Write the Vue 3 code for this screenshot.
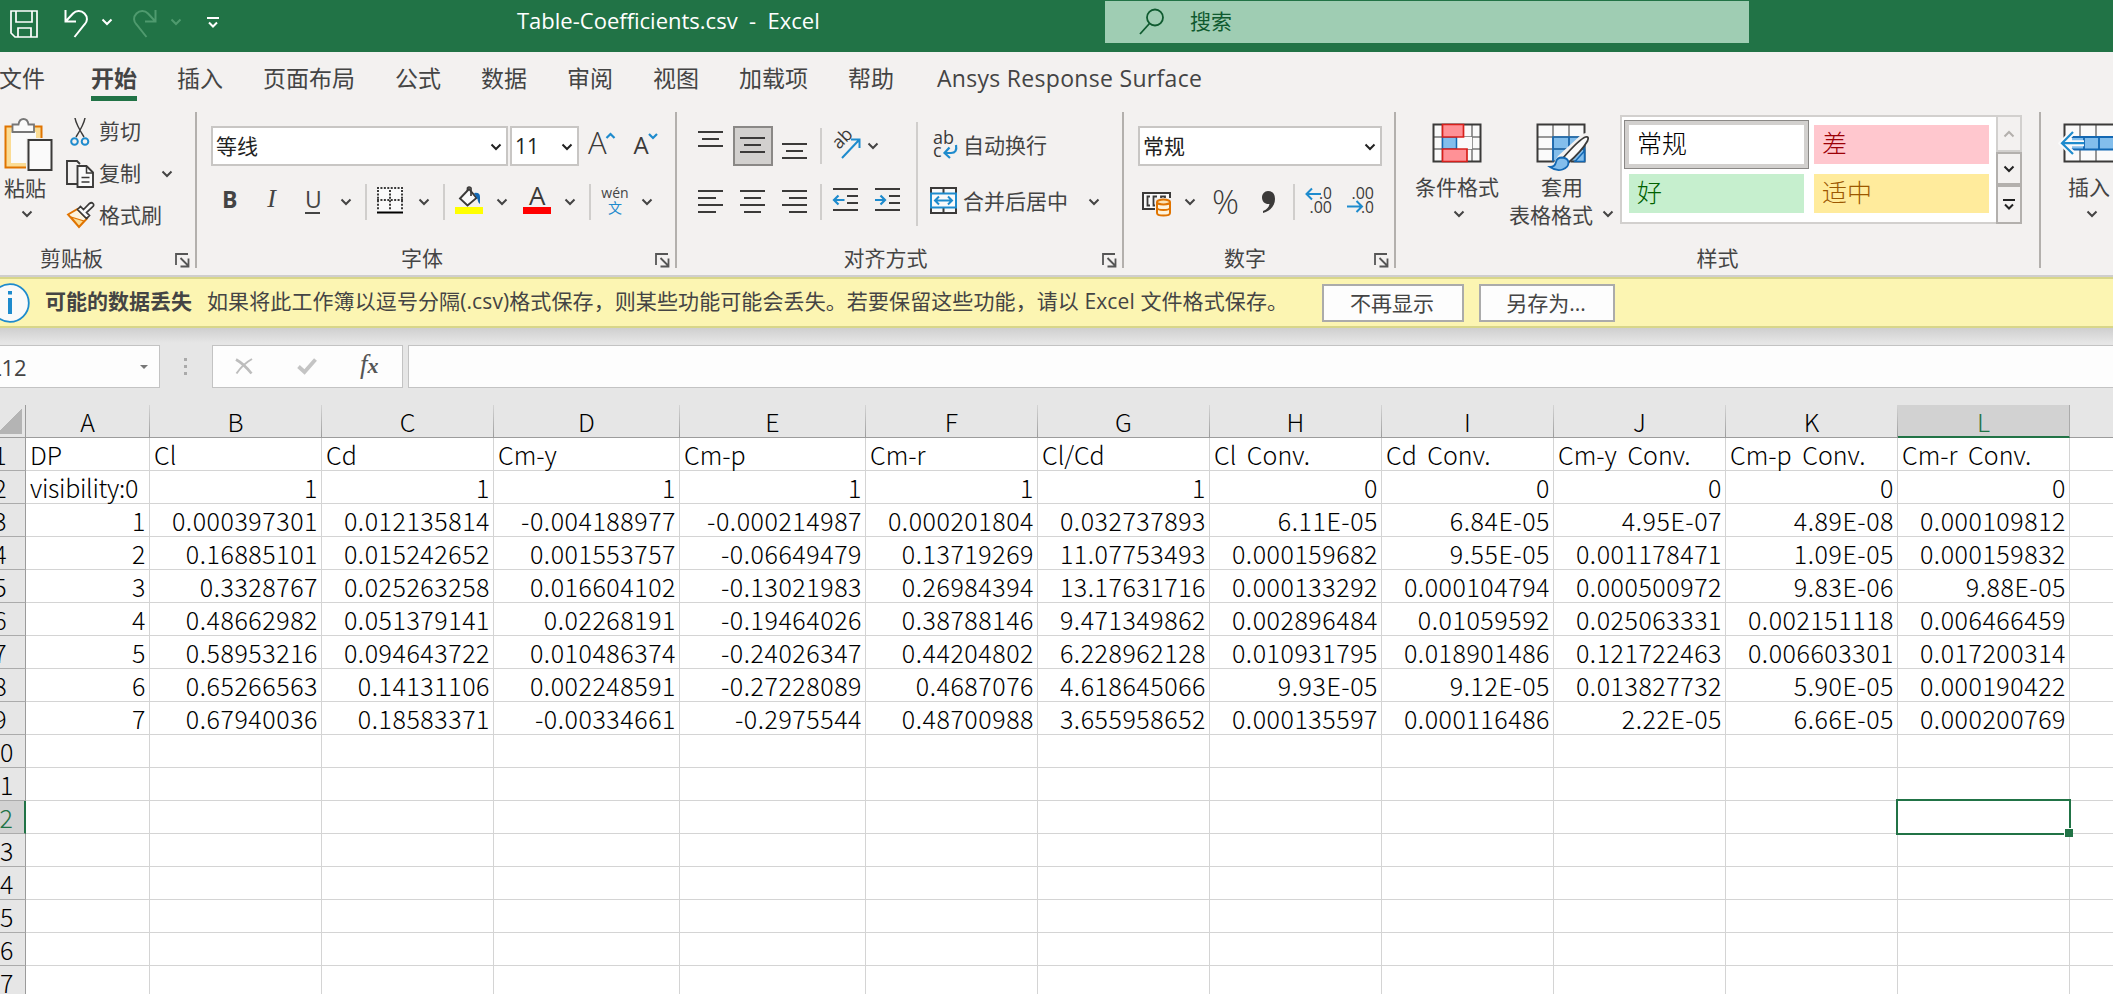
<template>
    <div class="excel">
        <div class="titlebar">
            <svg class="qa-save" width="28" height="28" viewBox="0 0 28 28" fill="none" stroke="#fff" stroke-width="1.7">
                <path d="M1 1h26v26H5l-4-4z"/>
                <path d="M6 1v11h16V1M8 27v-9h13v9"/>
            </svg>
            <svg class="qa-undo" width="25" height="28" viewBox="0 0 25 28" fill="none" stroke="#fff" stroke-width="2">
                <path d="M1.5 0v11.5H12M2 11l7-7.5C12 .5 17 0 20.500 3.500c3.500 3.500 3 8 0 11L10.500 27"/>
            </svg>
            <Chevron class="qa-chev"/>
            <svg class="qa-redo" width="25" height="28" viewBox="0 0 25 28" fill="none" stroke="#4f9a6e" stroke-width="2">
                <path d="M23.500 0v11.500H13M23 11l-7-7.500C13 .5 8 0 4.500 3.500c-3.500 3.500-3 8 0 11L14.500 27"/>
            </svg>
            <Chevron class="qa-chev qa-chev-off"/>
            <svg class="qa-custom" width="12" height="12" viewBox="0 0 12 12" fill="none" stroke="#fff" stroke-width="2">
                <path d="M0 1h12M2 5.500l4 4 4-4"/>
            </svg>
            <div class="doc-name">Table-Coefficients.csv&nbsp; -&nbsp; Excel</div>
            <div class="search">
                <svg width="26" height="28" viewBox="0 0 26 28" fill="none" stroke="#0f5a2f" stroke-width="1.8">
                    <circle cx="16" cy="9.500" r="8"/>
                    <path d="M10.500 15.500L1 26"/>
                </svg>
                <span>搜索</span>
            </div>
        </div>

        <div class="tabs">
            <div v-for="tab in tabs" :key="tab" class="tab" :class="{ active: tab === '开始', addin: tab.startsWith('Ansys') }">{{ tab }}</div>
        </div>

        <div class="ribbon">
            <!-- clipboard -->
            <div class="group g-clip">
                <div class="group-body">
                    <div class="paste">
                        <svg width="50" height="54" viewBox="0 0 50 54">
                            <path d="M1.500 8.500h36v41h-36z" fill="#fbdc94" stroke="#e07400" stroke-width="2"/>
                            <path d="M7 14h25v31H7z" fill="#fafafa"/>
                            <path d="M22 20h28v34H22z" fill="#f3f1f0"/>
                            <path d="M8.500 14V6.500h6C15 3 17 1 19.500 1s4.500 2 5 5.500h5.500V14z" fill="#fafafa" stroke="#777" stroke-width="1.800"/>
                            <path d="M24.500 22h23v30h-23z" fill="#fafafa" stroke="#3b3a39" stroke-width="2"/>
                        </svg>
                        <span>粘贴</span>
                        <Chevron/>
                    </div>
                    <div class="clip-list">
                        <div class="clip-item">
                            <svg width="28" height="30" viewBox="0 0 28 30" fill="none">
                                <path d="M9 1c1 6 4 11 9 19M19 1c-1 6-4 11-9 19" stroke="#3b3a39" stroke-width="1.500"/>
                                <circle cx="8.500" cy="24.500" r="3.300" stroke="#1e8bcd" stroke-width="2"/>
                                <circle cx="19" cy="24.500" r="3.300" stroke="#1e8bcd" stroke-width="2"/>
                            </svg>
                            <span>剪切</span>
                        </div>
                        <div class="clip-item">
                            <svg width="28" height="30" viewBox="0 0 28 30" fill="none" stroke="#3b3a39" stroke-width="1.900">
                                <path d="M11 25H1V2h10l3 3" fill="none"/>
                                <path d="M11.500 7h9l6.500 6.500V28H11.500z" fill="#fafafa"/>
                                <path d="M20.500 7v7H27M15.500 18.500h8M15.500 23h8" stroke-width="1.500"/>
                            </svg>
                            <span>复制</span>
                            <Chevron class="copy-chev"/>
                        </div>
                        <div class="clip-item">
                            <svg width="28" height="30" viewBox="0 0 28 30" fill="none">
                                <path d="M2 13.500L11.500 8l9.500 9.500L13 26z" fill="#fdf3dd" stroke="#e07400" stroke-width="1.900"/>
                                <path d="M5 16l13 4-5 5.500z" fill="#fbdc94" stroke="#e07400" stroke-width="1.300"/>
                                <path d="M11.500 8.500L14.500 5.500 17.500 8.500 23.500 2.500Q25.500 1 27 2.500T26.500 6L20.500 11.500 23.500 14.500 20.500 17.500z" fill="#fafafa" stroke="#3b3a39" stroke-width="1.700"/>
                            </svg>
                            <span>格式刷</span>
                        </div>
                    </div>
                </div>
                <div class="group-foot"><span>剪贴板</span><Launcher/></div>
            </div>

            <!-- font -->
            <div class="group g-font">
                <div class="group-body stack">
                    <div class="row row1">
                        <div class="combo combo-font"><span>等线</span><Chevron/></div>
                        <div class="combo combo-size"><span>11</span><Chevron/></div>
                        <svg class="ic-grow" width="28" height="30" viewBox="0 0 28 30" fill="none">
                            <text x="0" y="27" font-size="31" font-weight="300" fill="#3b3a39">A</text>
                            <path d="M18.500 11l4-4 4 4" stroke="#1e8bcd" stroke-width="2.200"/>
                        </svg>
                        <svg class="ic-shrink" width="26" height="30" viewBox="0 0 26 30" fill="none">
                            <text x="0.500" y="27" font-size="24" fill="#3b3a39">A</text>
                            <path d="M16 7l4 4 4-4" stroke="#1e8bcd" stroke-width="2.200"/>
                        </svg>
                    </div>
                    <div class="row row2">
                        <div class="letter bold">B</div>
                        <div class="letter italic">I</div>
                        <div class="letter under">U</div>
                        <Chevron/>
                        <div class="sep s1"></div>
                        <svg class="ic-border" width="26" height="27" viewBox="0 0 26 27" fill="none">
                            <path d="M0 0h26v25H0z" fill="#fafafa"/>
                            <path d="M0 1h26M0 13h26M1 3v20M13 3v20M25 3v20" stroke="#3b3a39" stroke-width="2" stroke-dasharray="2 1.430"/>
                            <path d="M0 25.500h26" stroke="#000" stroke-width="2"/>
                        </svg>
                        <Chevron class="c2"/>
                        <div class="sep s2"></div>
                        <svg class="ic-fill" width="28" height="28" viewBox="0 0 28 28" fill="none">
                            <path d="M5 12.500L14 3l7.500 9L12.500 19.500z" fill="#fafafa" stroke="#3b3a39" stroke-width="1.900"/>
                            <path d="M12.500 5V2q1.500-2 3.500 0v8" stroke="#3b3a39" stroke-width="1.700"/>
                            <path d="M19 7q6-1 6 4v7q-2-1-2.500-5z" fill="#1368b3"/>
                            <path d="M0 21h28v7H0z" fill="#ff0"/>
                        </svg>
                        <Chevron class="c2"/>
                        <svg class="ic-color" width="28" height="28" viewBox="0 0 28 28" fill="none">
                            <text x="6" y="19" font-size="26" fill="#3b3a39">A</text>
                            <path d="M0 21h28v7H0z" fill="#f00"/>
                        </svg>
                        <Chevron class="c2"/>
                        <div class="sep s3"></div>
                        <div class="phonetic"><span>wén</span><b>文</b></div>
                        <Chevron class="c4"/>
                    </div>
                </div>
                <div class="group-foot"><span>字体</span><Launcher/></div>
            </div>

            <!-- alignment -->
            <div class="group g-align">
                <div class="group-body">
                    <div class="align-left">
                        <div class="row row1">
                            <div class="tool"><Lines :rows="[[0, 25], [4, 21], [0, 25]]" :top="-7"/></div>
                            <div class="tool pressed"><Lines :rows="[[0, 25], [4, 21], [0, 25]]" :top="-1"/></div>
                            <div class="tool"><Lines :rows="[[0, 25], [4, 21], [0, 25]]" :top="5"/></div>
                            <div class="sep"></div>
                            <svg class="ic-orient" width="30" height="30" viewBox="0 0 30 30" fill="none">
                                <text x="0" y="0" transform="translate(8 20) rotate(-45)" font-size="18" fill="#3b3a39">ab</text>
                                <path d="M11 28L28 10M20 9.500h8.500V18" stroke="#1e8bcd" stroke-width="2"/>
                            </svg>
                            <Chevron/>
                        </div>
                        <div class="row row2">
                            <div class="tool"><Lines :rows="[[0, 25], [0, 18], [0, 25], [0, 18]]" :top="-1"/></div>
                            <div class="tool"><Lines :rows="[[0, 25], [4, 21], [0, 25], [4, 21]]" :top="-1"/></div>
                            <div class="tool"><Lines :rows="[[0, 25], [7, 25], [0, 25], [7, 25]]" :top="-1"/></div>
                            <div class="sep"></div>
                            <svg class="ic-indent" width="26" height="24" viewBox="0 0 26 24" fill="none" stroke-width="1.900">
                                <path d="M0 1h25M14 8h11M14 15h11M0 22h25" stroke="#3b3a39"/>
                                <path d="M1 12h10.500M5.500 7.500L1 12l4.500 4.500" stroke="#1e8bcd" stroke-width="2.200"/>
                            </svg>
                            <svg class="ic-indent" width="26" height="24" viewBox="0 0 26 24" fill="none" stroke-width="1.900">
                                <path d="M0 1h25M14 8h11M14 15h11M0 22h25" stroke="#3b3a39"/>
                                <path d="M0 12h10M5.500 7.500L10 12l-4.500 4.500" stroke="#1e8bcd" stroke-width="2.200"/>
                            </svg>
                        </div>
                    </div>
                    <div class="tall-sep"></div>
                    <div class="align-right">
                        <div class="row row1">
                            <svg class="ic-wrap" width="28" height="30" viewBox="0 0 28 30" fill="none">
                                <text x="3" y="14" font-size="18" fill="#3b3a39">ab</text>
                                <text x="3" y="27" font-size="18" fill="#3b3a39">c</text>
                                <path d="M26 15q1.500 8-5 8H15M19.500 17.500L14.500 23l5.500 5" stroke="#1e8bcd" stroke-width="2.200"/>
                            </svg>
                            <span>自动换行</span>
                        </div>
                        <div class="row row2">
                            <svg class="ic-merge" width="27" height="27" viewBox="0 0 27 27" fill="none">
                                <path d="M1 1h25v25H1zM13.500 1v5M13.500 21v5" fill="#fafafa" stroke="#3b3a39" stroke-width="2"/>
                                <path d="M1 6.500h25v14H1z" fill="#fafafa" stroke="#1e8bcd" stroke-width="2"/>
                                <path d="M5 13.500h17M9 9.500l-4 4 4 4M18 9.500l4 4-4 4" stroke="#1e8bcd" stroke-width="2"/>
                            </svg>
                            <span>合并后居中</span>
                            <Chevron class="merge-chev"/>
                        </div>
                    </div>
                </div>
                <div class="group-foot"><span>对齐方式</span><Launcher/></div>
            </div>

            <!-- number -->
            <div class="group g-num">
                <div class="group-body stack">
                    <div class="row row1">
                        <div class="combo combo-num"><span>常规</span><Chevron/></div>
                    </div>
                    <div class="row row2">
                        <svg class="ic-money" width="30" height="24" viewBox="0 0 30 24" fill="none">
                            <path d="M1 1h27v16H1z" fill="#fafafa" stroke="#3b3a39" stroke-width="2"/>
                            <path d="M8 4.500H5.500v9H8M15 4.500h-3.500v9H15M19 7V4.500h4V7" stroke="#3b3a39" stroke-width="1.800"/>
                            <path d="M13 6h17v18H13z" fill="#f3f1f0"/>
                            <path d="M15 10v11q0 2.500 6.500 2.500T28 21V10" fill="#fdf3dd" stroke="#e07400" stroke-width="2"/>
                            <ellipse cx="21.500" cy="10" rx="6.500" ry="2.500" fill="#fbe3b5" stroke="#e07400" stroke-width="2"/>
                            <path d="M15 15.500q0 2.500 6.500 2.500t6.500-2.500" stroke="#e07400" stroke-width="1.800"/>
                        </svg>
                        <Chevron/>
                        <svg class="ic-pct" width="27" height="26" viewBox="0 0 27 26">
                            <text x="0" y="25" font-size="33" font-weight="300" textLength="27" lengthAdjust="spacingAndGlyphs" fill="#3b3a39">%</text>
                        </svg>
                        <svg class="ic-comma" width="15" height="24" viewBox="0 0 15 24">
                            <path d="M7 1c5 0 7 3.500 7 8 0 6-4 12-12 14v-2c4-1.500 6-4 6.500-7C4 14.500 1 11.500 1 7.500 1 4 3.500 1 7 1z" fill="#3b3a39"/>
                        </svg>
                        <div class="sep"></div>
                        <svg class="ic-dec" width="28" height="28" viewBox="0 0 28 28" fill="none">
                            <text x="14" y="13" font-size="17" textLength="13" lengthAdjust="spacingAndGlyphs" fill="#3b3a39">.0</text>
                            <text x="4.500" y="27" font-size="17" textLength="22.500" lengthAdjust="spacingAndGlyphs" fill="#3b3a39">.00</text>
                            <path d="M1 8h15M7 2.500L1.500 8 7 13.500" stroke="#1e8bcd" stroke-width="2"/>
                        </svg>
                        <svg class="ic-dec" width="28" height="28" viewBox="0 0 28 28" fill="none">
                            <text x="4.500" y="13" font-size="17" textLength="22.500" lengthAdjust="spacingAndGlyphs" fill="#3b3a39">.00</text>
                            <text x="14" y="27" font-size="17" textLength="13" lengthAdjust="spacingAndGlyphs" fill="#3b3a39">.0</text>
                            <path d="M0 20.500h15M9.500 15l5.500 5.500L9.500 26" stroke="#1e8bcd" stroke-width="2"/>
                        </svg>
                    </div>
                </div>
                <div class="group-foot"><span>数字</span><Launcher/></div>
            </div>

            <!-- styles -->
            <div class="group g-style">
                <div class="group-body">
                    <div class="big big-cond">
                        <svg width="50" height="50" viewBox="0 0 50 50" fill="none">
                            <path d="M1.500 1.500h47v37h-47z" fill="#fafafa"/>
                            <path d="M1.500 14h47M1.500 26h47M10.500 1.500v37M40 1.500v37" stroke="#777" stroke-width="1.500"/>
                            <path d="M1.500 1.500h47v37h-47z" stroke="#3b3a39" stroke-width="2"/>
                            <path d="M24.500 14H40v12H24.500z" fill="#fafafa"/>
                            <path d="M10.500 14h14v12h-14z" fill="#83beec" stroke="#1368b3" stroke-width="1.500"/>
                            <path d="M10.500 1.500h21V14h-21zM10.500 26H35v12.500H10.500z" fill="#ff9196" stroke="#d8201c" stroke-width="1.700"/>
                        </svg>
                        <span>条件格式</span>
                        <Chevron/>
                    </div>
                    <div class="big big-table">
                        <svg width="54" height="50" viewBox="0 0 54 50" fill="none">
                            <path d="M1.500 1.500h47v37h-47z" fill="#fafafa"/>
                            <path d="M17 14h31.500v24.500H17z" fill="#83beec"/>
                            <path d="M1.500 14h47M1.500 26h47M17 1.500v37M33 1.500v37" stroke="#777" stroke-width="1.500"/>
                            <path d="M1.500 1.500h47v37h-47z" stroke="#3b3a39" stroke-width="2"/>
                            <path d="M17 38.500V14h31.500v24.500M17 26h31.500M33 14v24.500" stroke="#1368b3" stroke-width="1.700"/>
                            <path d="M22 33L46 11l8-2v8L36 36 32 46 14 48 11 43 17 41z" fill="#f3f1f0"/>
                            <path d="M39 38.500h9.500V28z" fill="#83beec" stroke="#1368b3" stroke-width="1.500"/>
                            <path d="M27 35C34 27 44 16 49.500 14q4-1 2 4C48 24 39 34 32 40z" fill="#fafafa" stroke="#3b3a39" stroke-width="1.800"/>
                            <path d="M14 44q5 0 6-5 1-4.500 6-4.500 6 .5 6.500 5 0 5-6 7-6 2-12.500-2.500z" fill="#83beec" stroke="#1368b3" stroke-width="1.800"/>
                        </svg>
                        <span>套用</span>
                        <span class="two">表格格式 <Chevron/></span>
                    </div>
                    <div class="gallery">
                        <div class="swatches">
                            <div v-for="s in cellStyles" :key="s.name" class="swatch" :class="s.cls">{{ s.name }}</div>
                        </div>
                        <div class="scroller">
                            <div class="sc up"><svg width="12" height="8" viewBox="0 0 12 8" fill="none" stroke="#b3b0ad" stroke-width="2"><path d="M1.500 6.500L6 2l4.500 4.500"/></svg></div>
                            <div class="sc down"><Chevron/></div>
                            <div class="sc more"><svg width="12" height="12" viewBox="0 0 12 12" fill="none" stroke="#222" stroke-width="2"><path d="M0 1h12M2 5.500l4 4 4-4"/></svg></div>
                        </div>
                    </div>
                </div>
                <div class="group-foot"><span>样式</span></div>
            </div>

            <!-- cells -->
            <div class="group g-cells">
                <div class="group-body">
                    <div class="big big-insert">
                        <svg width="52" height="50" viewBox="0 0 52 50" fill="none">
                            <path d="M4.500 1.500h60v37h-60z" fill="#fafafa"/>
                            <path d="M20 1.500v37M36 1.500v37" stroke="#777" stroke-width="1.500"/>
                            <path d="M64 1.500H4.500v37H64" stroke="#3b3a39" stroke-width="2"/>
                            <path d="M12 14h52v12.500H12z" fill="#83beec"/>
                            <path d="M10 14h54M10 26.500h54M24 14v12.500M39 14v12.500" stroke="#1368b3" stroke-width="1.800"/>
                            <path d="M2 20.200h22M13 9L2 20.200 13 31" stroke="#fafafa" stroke-width="6"/>
                            <path d="M2 20.200h22M13 9L2 20.200 13 31" stroke="#1e8bcd" stroke-width="2.200"/>
                        </svg>
                        <span>插入</span>
                        <Chevron/>
                    </div>
                </div>
            </div>
        </div>

        <div class="message">
            <svg width="30" height="40" viewBox="0 0 30 40" fill="none">
                <circle cx="10" cy="20" r="18.800" fill="#fafafa" stroke="#1e8bcd" stroke-width="1.800"/>
                <path d="M8 8h4v3.500H8zM8 15h4v16H8z" fill="#1e8bcd"/>
            </svg>
            <b>可能的数据丢失</b>
            <span class="message-text">如果将此工作簿以逗号分隔(.csv)格式保存，则某些功能可能会丢失。若要保留这些功能，请以 Excel 文件格式保存。</span>
            <button class="msg-btn hide">不再显示</button>
            <button class="msg-btn saveas">另存为...</button>
        </div>

        <div class="formula">
            <div class="namebox"><span>L12</span><i></i></div>
            <div class="dots"><i></i><i></i><i></i></div>
            <div class="fx-box">
                <svg width="18" height="17" viewBox="0 0 18 17" fill="none" stroke="#bdbdbd">
                    <path d="M1 1.500Q9 6 16.500 15.500" stroke-width="2.600"/>
                    <path d="M17 1Q8 6 1.500 15.500" stroke-width="2"/>
                </svg>
                <svg width="20" height="17" viewBox="0 0 20 17" fill="none" stroke="#c4c4c4" stroke-width="3.800">
                    <path d="M1.500 8.500l6 5.500L18.500 1.500"/>
                </svg>
                <span class="fx">f<em>x</em></span>
            </div>
            <div class="fx-input"></div>
        </div>

        <div class="sheet">
            <div class="sheet-row sheet-head">
                <div class="corner"></div>
                <div 
                    v-for="(col, c) in columns" 
                    :key="col.name"
                    class="col-head"
                    :class="{ selected: c === activeCol }"
                    :style="{ width: col.width + 'px' }"
                >{{ col.name }}</div>
                <div class="col-head last"></div>
            </div>
            <div v-for="n in 17" :key="n" class="sheet-row">
                <div class="row-head" :class="{ selected: n === activeRow }"><span>{{ n }}</span></div>
                <div 
                    v-for="(col, c) in columns" 
                    :key="col.name"
                    class="cell"
                    :class="{ num: isNumber(n, c), tight: n === 2 && c === 0 }"
                    :style="{ width: col.width + 'px' }"
                >
                    {{ cellValue(n, c) }}
                    <div v-if="n === activeRow && c === activeCol" class="cursor"><i></i></div>
                </div>
                <div class="cell last"></div>
            </div>
        </div>
    </div>
</template>

<script setup>
    import { h, ref } from 'vue';

    const tabs = ['文件', '开始', '插入', '页面布局', '公式', '数据', '审阅', '视图', '加载项', '帮助', 'Ansys Response Surface'];

    const cellStyles = [
        { name: '常规', cls: 'normal' },
        { name: '差', cls: 'bad' },
        { name: '好', cls: 'good' },
        { name: '适中', cls: 'neutral' },
    ];

    const widths = [124, 172, 172, 186, 186, 172, 172, 172, 172, 172, 172, 172];
    const columns = widths.map((width, i) => ({ name: 'ABCDEFGHIJKL'[i], width }));

    const activeRow = ref(12);
    const activeCol = ref(11);

    const rows = [
        ['DP', 'Cl', 'Cd', 'Cm-y', 'Cm-p', 'Cm-r', 'Cl/Cd', 'Cl Conv.', 'Cd Conv.', 'Cm-y Conv.', 'Cm-p Conv.', 'Cm-r Conv.'],
        ['visibility:0', '1', '1', '1', '1', '1', '1', '0', '0', '0', '0', '0'],
        ['1', '0.000397301', '0.012135814', '-0.004188977', '-0.000214987', '0.000201804', '0.032737893', '6.11E-05', '6.84E-05', '4.95E-07', '4.89E-08', '0.000109812'],
        ['2', '0.16885101', '0.015242652', '0.001553757', '-0.06649479', '0.13719269', '11.07753493', '0.000159682', '9.55E-05', '0.001178471', '1.09E-05', '0.000159832'],
        ['3', '0.3328767', '0.025263258', '0.016604102', '-0.13021983', '0.26984394', '13.17631716', '0.000133292', '0.000104794', '0.000500972', '9.83E-06', '9.88E-05'],
        ['4', '0.48662982', '0.051379141', '0.02268191', '-0.19464026', '0.38788146', '9.471349862', '0.002896484', '0.01059592', '0.025063331', '0.002151118', '0.006466459'],
        ['5', '0.58953216', '0.094643722', '0.010486374', '-0.24026347', '0.44204802', '6.228962128', '0.010931795', '0.018901486', '0.121722463', '0.006603301', '0.017200314'],
        ['6', '0.65266563', '0.14131106', '0.002248591', '-0.27228089', '0.4687076', '4.618645066', '9.93E-05', '9.12E-05', '0.013827732', '5.90E-05', '0.000190422'],
        ['7', '0.67940036', '0.18583371', '-0.00334661', '-0.2975544', '0.48700988', '3.655958652', '0.000135597', '0.000116486', '2.22E-05', '6.66E-05', '0.000200769'],
    ];

    function cellValue(n, c) {
        return rows[n - 1] ? rows[n - 1][c] : '';
    }

    function isNumber(n, c) {
        const value = cellValue(n, c);
        return value !== '' && !isNaN(value);
    }

    // small shared glyphs
    const Chevron = () => h('svg', { class: 'chev', width: 12, height: 8, viewBox: '0 0 12 8' }, [
        h('path', { d: 'M1.500 1.500L6 6l4.500-4.500', fill: 'none', stroke: 'currentColor', 'stroke-width': 2 }),
    ]);

    const Launcher = () => h('svg', { class: 'launcher', width: 15, height: 15, viewBox: '0 0 15 15' }, [
        h('path', { d: 'M1 12V1h12M5.500 5l8 8M13.500 5.500v8h-8', fill: 'none', stroke: '#555', 'stroke-width': 1.8 }),
    ]);

    // stacked text lines, each given as [start, end]
    const Lines = (props) => {
        const height = props.rows.length * 7 - 5;
        return h('svg', { width: 26, height: 38, viewBox: '0 0 26 38' }, props.rows.map(([from, to], i) =>
            h('rect', { x: from, y: Math.round(19 - height / 2) + props.top + i * 7, width: to - from, height: 2, fill: '#3b3a39' })
        ));
    };
    Lines.props = ['rows', 'top'];
</script>

<style>
    body {
        overflow: hidden;
    }
</style>

<style scoped>
    .excel {
        width: 2113px;
        height: 994px;
        overflow: hidden;
        background: #e6e6e6;
        color: #444;
        font-family: "Open Sans", "Noto Sans CJK SC", sans-serif;
        font-size: 21px;
        line-height: 28px;
        white-space: nowrap;
    }

    .excel * {
        box-sizing: border-box;
    }

    svg {
        display: block;
        flex: none;
        overflow: visible;
    }

    .titlebar {
        display: flex;
        align-items: flex-start;
        height: 52px;
        background: #217346;
        color: #fff;
    }

    .qa-save {
        margin: 10px 0 0 10px;
    }

    .qa-undo {
        margin: 10px 0 0 26px;
    }

    .qa-chev {
        margin: 18px 0 0 12px;
    }

    .qa-redo {
        margin: 10px 0 0 19px;
    }

    .qa-chev-off {
        margin-left: 13px;
        color: #4f9a6e;
    }

    .qa-custom {
        margin: 17px 0 0 25px;
    }

    .doc-name {
        width: 588px;
        margin: 6px 0 0 298px;
        font-size: 22px;
    }

    .search {
        display: flex;
        align-items: center;
        width: 644px;
        height: 42px;
        margin-top: 1px;
        padding-left: 34px;
        background: #9fcdb3;
        color: #0f5a2f;
    }

    .search span {
        margin: -2px 0 0 25px;
    }

    .tabs {
        display: flex;
        gap: 40px;
        height: 60px;
        padding-top: 11px;
        background: #f3f1f0;
    }

    .tab {
        height: 38px;
        line-height: 30px;
        font-size: 23px;
    }

    .tab:first-child {
        margin-left: -1px;
    }

    .tab.active {
        margin-left: 6px;
        border-bottom: 5px solid #217346;
        font-weight: 700;
    }

    .tab.addin {
        margin-left: 3px;
        letter-spacing: 0.3px;
    }

    .ribbon {
        display: flex;
        height: 165px;
        background: #f3f1f0;
        border-bottom: 2px solid #cfcecd;
    }

    .group {
        display: flex;
        flex-direction: column;
        flex: none;
        height: 156px;
        border-right: 2px solid #b3b0ad;
    }

    .g-clip { width: 197px; }
    .g-font { width: 480px; }
    .g-align { width: 447px; }
    .g-num { width: 272px; }
    .g-style { width: 645px; }
    .g-cells { width: 72px; border: 0; }

    .group-body {
        display: flex;
        height: 136px;
    }

    .group-body.stack {
        flex-direction: column;
    }

    .group-foot {
        display: flex;
        align-items: flex-end;
        height: 20px;
    }

    .group-foot span {
        flex: 1;
        height: 24px;
        line-height: 28px;
        text-align: center;
    }

    .g-clip .group-foot span {
        margin-left: -24px;
    }

    .launcher {
        margin: 0 5px 0 8px;
    }

    .paste {
        display: flex;
        flex-direction: column;
        align-items: center;
        width: 50px;
        margin-left: 4px;
        padding-top: 6px;
    }

    .paste span {
        margin: 2px 8px 0 0;
    }

    .paste .chev {
        margin: 8px 4px 0 0;
    }

    .clip-list {
        margin: -1px 0 0 12px;
    }

    .clip-item {
        display: flex;
        align-items: center;
        height: 42px;
    }

    .clip-item span {
        margin: -2px 0 0 5px;
    }

    .copy-chev {
        margin-left: 20px;
    }

    .row {
        display: flex;
        align-items: center;
    }

    .row1 {
        height: 40px;
        margin-top: 14px;
    }

    .row2 {
        height: 36px;
        margin-top: 18px;
    }

    .combo {
        display: flex;
        align-items: center;
        justify-content: space-between;
        height: 40px;
        padding: 0 4px 0 3px;
        background: #fff;
        border: 2px solid #c8c6c4;
        color: #222;
    }

    .combo .chev {
        margin-top: 2px;
    }

    .combo-font {
        width: 297px;
        margin-left: 14px;
    }

    .combo-size {
        width: 69px;
        margin-left: 2px;
    }

    .combo-num {
        width: 244px;
        margin-left: 14px;
    }

    .ic-grow {
        margin: -8px 0 0 9px;
    }

    .ic-shrink {
        margin: -8px 0 0 17px;
    }

    .letter {
        width: 15px;
        line-height: 26px;
        text-align: center;
        font-size: 23px;
    }

    .letter.bold {
        margin: -7px 0 0 25px;
        font-weight: 700;
    }

    .letter.italic {
        margin: -7px 0 0 27px;
        font-family: "Liberation Serif", serif;
        font-style: italic;
        font-size: 26px;
    }

    .letter.under {
        margin: -1px 20px 0 26px;
        height: 25px;
        line-height: 20px;
        border-bottom: 2px solid #444;
    }

    .sep {
        width: 2px;
        height: 36px;
        background: #d0cecc;
    }

    .s1 { margin-left: 13px; }
    .s2 { margin-left: 13px; }
    .s3 { margin-left: 13px; }

    .ic-border {
        margin: -4px 15px 0 10px;
    }

    .ic-fill {
        margin: -5px 13px 0 10px;
    }

    .ic-color {
        margin: -5px 13px 0 15px;
    }

    .phonetic {
        display: flex;
        flex-direction: column;
        align-items: center;
        width: 26px;
        margin: -5px 13px 0 11px;
        font-size: 14px;
        line-height: 15px;
    }

    .phonetic b {
        font-weight: 400;
        color: #1e8bcd;
    }

    .align-left {
        width: 239px;
        padding-left: 14px;
    }

    .tool {
        display: flex;
        align-items: center;
        justify-content: center;
        width: 40px;
        height: 40px;
        margin-right: 2px;
    }

    .tool.pressed {
        background: #d2d0ce;
        border: 2px solid #8a8886;
    }

    .align-left .sep {
        margin-left: 3px;
    }

    .ic-orient {
        margin: -2px 6px 0 9px;
    }

    .ic-indent {
        margin: -4px 5px 0 11px;
    }

    .tall-sep {
        width: 2px;
        height: 104px;
        margin-top: 10px;
        background: #d0cecc;
    }

    .align-right {
        padding-left: 12px;
    }

    .align-right span {
        margin: -2px 0 0 6px;
    }

    .ic-wrap {
        margin: -2px -1px 0 0;
    }

    .ic-merge {
        margin-top: -3px;
    }

    .merge-chev {
        margin-left: 20px;
    }

    .ic-money {
        margin: 4px 12px 0 18px;
    }

    .ic-pct {
        margin: -1px 22px 0 16px;
    }

    .ic-comma {
        margin-right: 17px;
    }

    .ic-dec {
        margin: -4px 4px 0 10px;
    }

    .big {
        display: flex;
        flex-direction: column;
        align-items: center;
        padding-top: 11px;
    }

    .big > svg:first-child {
        margin-bottom: 0;
    }

    .big .chev {
        margin-top: 9px;
    }

    .big-cond {
        width: 86px;
        margin-left: 18px;
    }

    .big-cond .chev {
        margin-left: 4px;
    }

    .big-table {
        align-items: flex-start;
        width: 116px;
        padding-left: 9px;
    }

    .big-table > svg {
        margin-left: 27px;
    }

    .big-table > span {
        margin-left: 32px;
    }

    .big-table > .two {
        display: flex;
        gap: 9px;
        margin-left: 0;
    }

    .big-insert {
        width: 60px;
        margin-left: 24px;
    }

    .big-insert > svg:first-child {
        margin-left: -6px;
    }

    .big-insert .chev {
        margin-left: 5px;
    }

    .gallery {
        display: flex;
        width: 402px;
        height: 109px;
        margin: 3px 0 0 4px;
        background: #fff;
        border: 2px solid #d2d0ce;
        border-right: 0;
    }

    .swatches {
        display: grid;
        grid-template-columns: 175px 175px;
        grid-template-rows: 39px 39px;
        gap: 10px;
        width: 374px;
        padding: 8px 0 0 7px;
    }

    .swatch {
        padding-left: 8px;
        font-family: "Noto Sans CJK SC", sans-serif;
        font-size: 25px;
        font-weight: 300;
        line-height: 35px;
    }

    .normal {
        color: #000;
        box-shadow: 0 0 0 4px #d2d0ce, 0 0 0 5px #8a8886;
    }

    .bad {
        background: #ffc7ce;
        color: #9c0006;
    }

    .good {
        background: #c6efce;
        color: #006100;
    }

    .neutral {
        background: #ffeb9c;
        color: #9c5700;
    }

    .scroller {
        width: 26px;
        margin: -2px 0;
    }

    .sc {
        display: flex;
        align-items: center;
        justify-content: center;
        border: 2px solid #b3b0ad;
        background: #f3f1f0;
        color: #222;
    }

    .up {
        height: 37px;
        border-color: #d2d0ce;
    }

    .down {
        height: 33px;
    }

    .more {
        height: 39px;
    }

    .message {
        display: flex;
        align-items: center;
        height: 51px;
        background: #fcf5b2;
        border: solid #d8d68a;
        border-width: 2px 0;
    }

    .message b {
        margin: -3px 0 0 15px;
    }

    .message-text {
        width: 1115px;
        margin: -3px 0 0 15px;
        letter-spacing: 0.1px;
    }

    .msg-btn {
        height: 38px;
        padding: 0 2px 0 0;
        background: #fdfdfd;
        border: 2px solid #ababab;
        color: #444;
        font: inherit;
        line-height: 30px;
    }

    .hide {
        width: 142px;
    }

    .saveas {
        width: 136px;
        margin-left: 15px;
    }

    .formula {
        display: flex;
        height: 77px;
        padding-top: 17px;
        background: linear-gradient(#cfcfcf, #e6e6e6 15px);
    }

    .namebox {
        display: flex;
        align-items: center;
        width: 160px;
        height: 43px;
        background: #fdfdfd;
        border: 1px solid #c3c3c3;
        border-left: 0;
        font-size: 22px;
    }

    .namebox span {
        width: 139px;
        margin-left: -10px;
    }

    .namebox i {
        margin-left: 11px;
        border: 4px solid transparent;
        border-top-color: #777;
        border-bottom: 0;
    }

    .dots {
        display: flex;
        flex-direction: column;
        gap: 4px;
        width: 3px;
        margin: 13px 25px 0 24px;
    }

    .dots i {
        height: 3px;
        background: #aaa;
    }

    .fx-box {
        display: flex;
        align-items: center;
        width: 191px;
        height: 43px;
        padding-left: 22px;
        background: #fdfdfd;
        border: 1px solid #c3c3c3;
    }

    .fx-box svg + svg {
        margin-left: 44px;
    }

    .fx {
        margin: -4px 0 0 43px;
        color: #555;
        font: italic 27px/30px "Liberation Serif", serif;
    }

    .fx em {
        font-size: 22px;
        font-weight: 700;
    }

    .fx-input {
        flex: 1;
        height: 43px;
        margin-left: 5px;
        background: #fdfdfd;
        border: 1px solid #c3c3c3;
        border-right: 0;
    }

    .sheet {
        background: #fff;
        color: #000;
        font-family: "Noto Sans CJK SC", sans-serif;
        font-size: 25px;
        font-weight: 300;
        line-height: 32px;
    }

    .sheet-row {
        display: flex;
        height: 33px;
    }

    .sheet-head {
        background: #e6e6e6;
    }

    .corner {
        width: 26px;
        border-right: 1px solid #9b9b9b;
        border-bottom: 1px solid #9b9b9b;
        background: linear-gradient(to bottom right, transparent 50%, #b4b4b4 50%) -3px 4px / 25px 25px no-repeat;
    }

    .col-head {
        flex: none;
        text-align: center;
        border-right: 1px solid;
        border-image: linear-gradient(#d6d6d6, #9b9b9b) 1;
        border-bottom: 1px solid #9b9b9b;
    }

    .col-head.selected {
        background: #d2d2d2;
        border-image: none;
        border-right-color: #ababab;
        border-bottom: 2px solid #217346;
        color: #217346;
    }

    .row-head {
        display: flex;
        justify-content: center;
        flex: none;
        width: 26px;
        background: #e6e6e6;
        border-right: 1px solid #9b9b9b;
        border-bottom: 1px solid #ababab;
    }

    .row-head span {
        flex: none;
        width: 50px;
        margin-left: -25px;
        text-align: center;
    }

    .row-head.selected {
        background: #d2d2d2;
        border-right: 2px solid #217346;
        color: #217346;
    }

    .cell {
        position: relative;
        flex: none;
        padding: 0 4px;
        border-right: 1px solid #d4d4d4;
        border-bottom: 1px solid #d4d4d4;
        word-spacing: 5px;
    }

    .cell.last,
    .col-head.last {
        flex: 1;
        border-right: 0;
    }

    .cell.num {
        padding-right: 3px;
        text-align: right;
        letter-spacing: 0.55px;
    }

    .cell.tight {
        letter-spacing: -0.3px;
    }

    .cursor {
        position: absolute;
        z-index: 1;
        top: -2px;
        left: -2px;
        width: 175px;
        height: 36px;
        border: 2px solid #217346;
    }

    .cursor i {
        position: absolute;
        right: -4px;
        bottom: -4px;
        width: 9px;
        height: 9px;
        background: #217346;
        border: solid #fff;
        border-width: 1px 0 0 1px;
    }
</style>
